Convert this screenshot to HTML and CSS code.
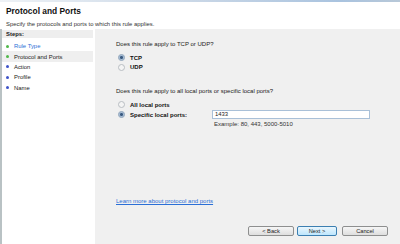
FILE: index.html
```html
<!DOCTYPE html>
<html>
<head>
<meta charset="utf-8">
<link rel="stylesheet" href="styles.css">
</head>
<body>
<div class="window">
  <div class="topline"></div>
  <div class="header">
    <div class="title">Protocol and Ports</div>
    <div class="subtitle">Specify the protocols and ports to which this rule applies.</div>
  </div>
  <div class="main">
    <div class="steps">
      <div class="steps-head">Steps:</div>
      <div class="step done"><span class="dot green"></span><span class="link">Rule Type</span></div>
      <div class="step current"><span class="dot green"></span>Protocol and Ports</div>
      <div class="step"><span class="dot blue"></span>Action</div>
      <div class="step"><span class="dot blue"></span>Profile</div>
      <div class="step"><span class="dot blue"></span>Name</div>
    </div>
    <div class="content">
      <div class="question q1">Does this rule apply to TCP or UDP?</div>
      <div class="options">
        <div class="opt"><span class="radio on"></span><span class="blabel">TCP</span></div>
        <div class="opt"><span class="radio"></span><span class="blabel">UDP</span></div>
      </div>
      <div class="question q2">Does this rule apply to all local ports or specific local ports?</div>
      <div class="options">
        <div class="opt"><span class="radio"></span><span class="blabel">All local ports</span></div>
        <div class="opt ports"><span class="radio on"></span><span class="blabel wide">Specific local ports:</span><div class="field">1433</div></div>
        <div class="example">Example: 80, 443, 5000-5010</div>
      </div>
      <div class="spacer"></div>
      <div class="learn">Learn more about protocol and ports</div>
      <div class="buttons">
        <div class="btn">&lt; Back</div>
        <div class="btn primary">Next &gt;</div>
        <div class="btn cancel">Cancel</div>
      </div>
    </div>
  </div>
</div>
</body>
</html>
```
FILE: styles.css
```css
html, body {
  margin: 0;
  padding: 0;
}
body {
  width: 400px;
  height: 244px;
  overflow: hidden;
  font-family: "Liberation Sans", Arial, sans-serif;
  color: #1a1a1a;
}
.window {
  width: 400px;
  height: 244px;
  display: flex;
  flex-direction: column;
  background: #fff;
}
.topline {
  height: 2px;
  background: linear-gradient(to right, #eef2f6 0%, #c8d6e6 50%, #a9c3df 85%, #b8c8d8 100%);
}
.header {
  height: 27px;
  padding: 4px 0 0 6px;
  box-sizing: border-box;
  background: #fff;
}
.title {
  font-weight: bold;
  font-size: 8.4px;
  line-height: 10px;
  color: #111;
}
.subtitle {
  margin-top: 5px;
  font-size: 5.9px;
  line-height: 7px;
  color: #333;
}
.main {
  flex: 1;
  display: flex;
}
.steps {
  width: 93px;
  border-left: 2px solid #b9c2c4;
  box-sizing: border-box;
  background: #fff;
  padding-top: 1px;
}
.steps-head {
  height: 8px;
  background: #eeeeee;
  font-weight: bold;
  font-size: 5.9px;
  line-height: 8px;
  padding-left: 4px;
  margin-bottom: 3px;
}
.step {
  display: flex;
  align-items: center;
  height: 10.4px;
  font-size: 5.9px;
  color: #222;
  padding-left: 4px;
}
.step.current {
  background: #efefef;
}
.link {
  color: #2b6fd6;
}
.dot {
  width: 3px;
  height: 3px;
  border-radius: 50%;
  margin-right: 5px;
}
.dot.green { background: #4fb84a; }
.dot.blue { background: #3d52c8; }
.content {
  flex: 1;
  background: #f0f0f0;
  margin-left: 2px;
  padding: 11px 0 0 21px;
  display: flex;
  flex-direction: column;
  font-size: 6px;
}
.question {
  line-height: 8px;
  color: #222;
}
.options {
  margin-top: 5px;
  padding-left: 2px;
  display: flex;
  flex-direction: column;
}
.q2 {
  margin-top: 15px;
}
.opt {
  display: flex;
  align-items: center;
  height: 9.6px;
}
.radio {
  width: 5px;
  height: 5px;
  border-radius: 50%;
  border: 1px solid #b9bec3;
  background: #f4f4f4;
  margin-right: 5px;
  box-sizing: content-box;
}
.radio.on {
  background: radial-gradient(circle, #3a5a80 0 1.3px, #a8bed6 1.6px 2.5px, #e8eef4 2.6px);
  border-color: #8aa0b8;
}
.blabel {
  font-weight: bold;
  color: #111;
}
.blabel.wide {
  width: 82px;
}
.field {
  width: 158px;
  height: 9px;
  box-sizing: border-box;
  background: #fff;
  border: 1px solid #a9c0d8;
  font-size: 5.9px;
  line-height: 7px;
  padding-left: 2px;
  color: #222;
}
.example {
  margin-left: 96px;
  margin-top: 1px;
  line-height: 8px;
  color: #333;
}
.spacer {
  flex: 1;
}
.learn {
  color: #2b6fd6;
  text-decoration: underline;
  line-height: 8px;
  margin-bottom: 21px;
}
.buttons {
  display: flex;
  justify-content: flex-end;
  gap: 3px;
  padding-right: 12px;
  margin-bottom: 8px;
}
.btn {
  width: 46px;
  height: 10px;
  box-sizing: border-box;
  border: 1px solid #8e8f8f;
  border-radius: 2px;
  background: linear-gradient(#f6f6f6, #dedede);
  font-size: 5.7px;
  line-height: 8px;
  text-align: center;
  color: #222;
}
.btn.primary {
  width: 40px;
  border-color: #3c7fb1;
  background: linear-gradient(#eaf6fd, #bee6fd);
}
.btn.cancel {
  margin-left: 2px;
}
```
